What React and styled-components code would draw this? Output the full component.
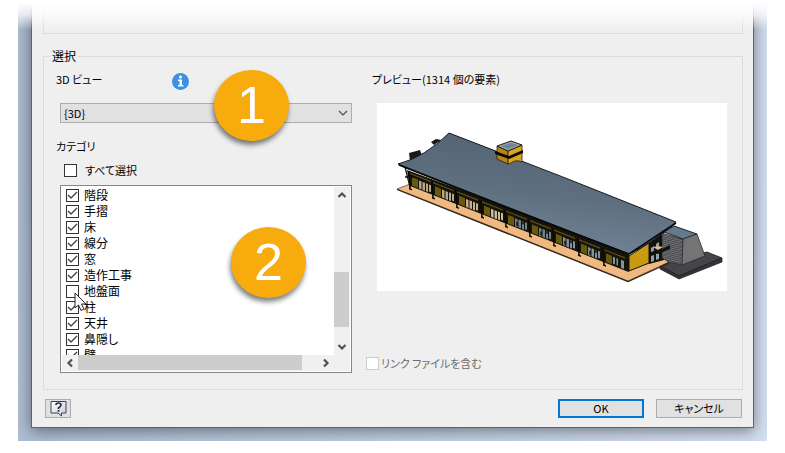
import React, { useState } from 'react'
import styled, { createGlobalStyle, css } from 'styled-components'

const GlobalStyle = createGlobalStyle`
  * {
    box-sizing: border-box;
  }
  body {
    margin: 0;
    background: #fff;
  }
  body, button, select, input {
    font-family: "Noto Sans CJK JP", "Liberation Sans", sans-serif;
    font-size: 11px;
    line-height: 16px;
    font-feature-settings: "palt";
    color: #000;
  }
`

const Backdrop = styled.main`
  position: relative;
  margin: 0 18px;
  padding: 0 13px 13px;
  overflow: hidden;
  background: linear-gradient(100deg, #a9b9cf, #d3dff1);
`

const Fade = styled.div`
  position: absolute;
  top: 0;
  left: 0;
  right: 0;
  height: 30px;
  background: linear-gradient(#fff 10%, rgba(255, 255, 255, 0.75) 50%, rgba(255, 255, 255, 0));
  pointer-events: none;
`

const Dialog = styled.form`
  padding: 0 10px 0 11px;
  border: 1px solid #5d6268;
  border-top: 0;
  background: #efefef;
  box-shadow: 0 3px 14px rgba(0, 0, 0, 0.45);
`

const UpperGroup = styled.div`
  height: 34px;
  border: 1px solid #dcdcdc;
  border-top: 0;
`

const Group = styled.fieldset`
  min-width: 0;
  margin: 14px 0 0;
  padding: 0 6px 16px;
  border: 1px solid #dcdcdc;
`

const Legend = styled.legend`
  padding: 0 2px;
  font-size: 12px;
`

const Columns = styled.div`
  display: grid;
  grid-template-columns: 296px minmax(0, 1fr);
  gap: 14px;
  padding: 7px 9px 0 6px;
`

const Settings = styled.div`
  display: flex;
  flex-direction: column;
`

const ViewHeader = styled.div`
  display: flex;
  height: 19px;
  margin-bottom: 13px;
`

const ViewLabel = styled.label`
  width: 116px;
`

const InfoButton = styled.button`
  align-self: flex-end;
  width: 17px;
  height: 17px;
  padding: 0;
  border: 0;
  background: none;

  svg {
    display: block;
  }
`

const SelectWrap = styled.div`
  position: relative;
  display: grid;
  align-items: center;
  margin-left: 4px;

  > select, > svg {
    grid-area: 1 / 1;
  }
  > svg {
    justify-self: end;
    margin-right: 4px;
    pointer-events: none;
  }
`

const Select = styled.select`
  appearance: none;
  width: 100%;
  height: 20px;
  padding: 0 3px;
  border: 1px solid #adadad;
  border-radius: 0;
  background: #e1e1e1;
  line-height: 16px;
`

const CategoryTitle = styled.div`
  margin: 15px 0 8px;
`

const CheckLabel = styled.label`
  display: flex;
  align-items: center;
  height: 16px;
  gap: ${({ $gap }) => $gap || 5}px;
  padding-left: ${({ $indent }) => $indent || 0}px;
  white-space: nowrap;
  ${({ $muted }) => $muted && css`
    color: #6d6d6d;
  `}
`

const BoxWrap = styled.span`
  display: grid;
  flex: none;

  > * {
    grid-area: 1 / 1;
  }
  > svg {
    pointer-events: none;
  }
`

const Box = styled.input`
  appearance: none;
  width: 13px;
  height: 13px;
  margin: 0;
  border: 1px solid #333;
  background: #fff;

  &:disabled {
    border-color: #ccc;
  }
`

const ListWrap = styled.div`
  position: relative;
  margin: 7px 0 0 4px;
`

const ListBox = styled.div`
  display: grid;
  grid-template: minmax(0, 1fr) 16px / minmax(0, 1fr) 16px;
  height: 188px;
  padding: 1px;
  border: 1px solid #828790;
  background: #fff;
`

const Rows = styled.ul`
  margin: 0;
  padding: 0;
  overflow: hidden;
  font-size: 12px;
  list-style: none;
`

const Row = styled.li`
  position: relative;
`

const ScrollBar = styled.div`
  display: flex;
  flex-direction: ${({ $vertical }) => ($vertical ? 'column' : 'row')};
  background: #f0f0f0;
`

const ScrollArrow = styled.button`
  display: flex;
  flex: none;
  align-items: center;
  justify-content: center;
  width: 16px;
  height: 16px;
  padding: 0;
  border: 0;
  background: none;
`

const Track = styled.div`
  display: flex;
  flex: 1;
  flex-direction: inherit;
`

const Thumb = styled.div`
  flex: ${({ $size }) => $size};
  margin: ${({ $vertical }) => ($vertical ? '0 1px 0 0' : '0 0 1px')};
  background: #cdcdcd;
`

const Space = styled.div`
  flex: ${({ $size }) => $size};
`

const Corner = styled.div`
  background: #f0f0f0;
`

const Pointer = styled.svg`
  position: absolute;
  top: 9px;
  left: 12px;
  z-index: 1;
`

const Badge = styled.span`
  position: absolute;
  top: ${({ $top }) => $top}px;
  left: ${({ $left }) => $left}px;
  z-index: 2;
  width: 75px;
  height: 71px;
  border-radius: 50%;
  background: #f8ab0c;
  box-shadow: -1px 4px 5px rgba(0, 0, 0, 0.5);
  color: #fff;
  font-family: "Liberation Sans", sans-serif;
  font-size: 52px;
  line-height: 70px;
  text-align: center;
`

const Preview = styled.div`
  display: flex;
  flex-direction: column;
`

const PreviewTitle = styled.div`
  padding-left: 6px;
`

const Canvas = styled.div`
  margin: 16px 0 64px 11px;
  background: #fff;

  svg {
    display: block;
    width: 100%;
    height: 188px;
  }
`

const Footer = styled.div`
  display: flex;
  gap: 12px;
  padding: 9px 1px 9px 2px;
`

const Button = styled.button`
  width: 86px;
  height: 19px;
  padding: 0;
  border: 1px solid #adadad;
  background: #e1e1e1;
  line-height: 15px;
  ${({ $primary }) => $primary && css`
    border: 2px solid #0078d7;
  `}
`

const HelpButton = styled(Button)`
  display: flex;
  align-items: center;
  justify-content: center;
  width: 26px;
  margin-right: auto;
`

const arrowPaths = {
  up: 'M1.5 7 L5 3.5 L8.5 7',
  down: 'M1.5 3 L5 6.5 L8.5 3',
  left: 'M7 1.5 L3.5 5 L7 8.5',
  right: 'M3 1.5 L6.5 5 L3 8.5',
}

const Arrow = ({ to }) => (
  <svg width="10" height="10" viewBox="0 0 10 10" fill="none" stroke="#505050" strokeWidth="2.2">
    <path d={ arrowPaths[to] } />
  </svg>
)

const Check = ({ children, checked, disabled, onChange, ...rest }) => (
  <CheckLabel { ...rest }>
    <BoxWrap>
      <Box type="checkbox" checked={ checked } disabled={ disabled } onChange={ onChange } />
      { checked && (
        <svg width="13" height="13" viewBox="0 0 13 13" fill="none" stroke="#444" strokeWidth="1.4">
          <path d="M2 6 L5 9 L11 3" />
        </svg>
      ) }
    </BoxWrap>
    { children }
  </CheckLabel>
)

const InfoIcon = () => (
  <svg width="17" height="17" viewBox="0 0 17 17">
    <circle cx="8.5" cy="8.5" r="8.5" fill="#3f90df" />
    <circle cx="8.5" cy="4" r="1.5" fill="#fff" />
    <path d="M6 6.5 H10 V12 H11.5 V13.5 H6 V12 H7.5 V8 H6 Z" fill="#fff" />
  </svg>
)

const HelpIcon = () => (
  <svg width="17" height="17" viewBox="0 0 17 17">
    <defs>
      <linearGradient id="bubble" x1="0" y1="0" x2="1" y2="1">
        <stop offset="0" stopColor="#fff" />
        <stop offset="1" stopColor="#c3ccd6" />
      </linearGradient>
    </defs>
    <path d="M1 1.5 H16 V13 H11.5 V16 L8 13 H1 Z" fill="url(#bubble)" stroke="#3a4654" />
    <path d="M6 5 Q6 3 8.500 3 Q11 3 11 5 Q11 6.200 8.500 8 V9" fill="none" stroke="#26313d" strokeWidth="1.700" />
    <path d="M7.600 10 H9.400 V11.700 H7.600 Z" fill="#26313d" />
  </svg>
)

// one entry per facade bay: x of its post, and the glass tint
const bays = [
  [33, '#b9a58a'], [56, '#b9a58a'], [80, '#c5b191'], [105, '#cdbb9c'],
  [129, '#71828c'], [153, '#71828c'], [177, '#82939a'], [202, '#82939a'], [227, '#82939a'],
]

const Building = () => (
  <svg viewBox="0 0 350 188" role="img" aria-label="プレビュー">
    <defs>
      <linearGradient id="roof" x1="0" y1="1" x2="0.3" y2="0">
        <stop offset="0" stopColor="#7a8c9d" />
        <stop offset="0.6" stopColor="#5e6f80" />
        <stop offset="1" stopColor="#556473" />
      </linearGradient>
      <pattern id="bricks" width="5" height="4" patternUnits="userSpaceOnUse" patternTransform="matrix(1 .25 0 1 0 0)">
        <path d="M0 0 H5 V4 H0 Z" fill="#77797c" />
        <path d="M0 .5 H5 M0 2.500 H5 M1 0 V2 M3.500 2 V4" stroke="#3c3e42" strokeWidth=".7" />
      </pattern>
    </defs>
    <path d="M32 50 L43 47 L45 53 L33 58 Z M54 39 L59 36 L64 37 L57 42 Z" fill="#17191b" />
    <path d="M283 163 L292 158 L330 149 L345 155 L302 173 Z" fill="#454549" stroke="#1b1b1b" strokeWidth=".8" />
    <path d="M283 163 L302 173 L345 155 V159 L302 176 L283 166 Z" fill="#343436" stroke="#1b1b1b" strokeWidth=".7" />
    <path d="M20 86 L33 81 L250 168 L286 155 L292 159 L251 178 Z" fill="#efb981" stroke="#302114" strokeWidth=".6" />
    <path d="M20 86.500 L251 178.500 L292 160" fill="none" stroke="#302114" strokeWidth="1.200" />
    <path d="M30 67 L252 149 V169 L33 83 Z" fill="#15140c" />
    { bays.map(([x, glass]) => (
      <g key={ x } transform={ `matrix(1 .39 0 1 ${ x } ${ 83 + (x - 33) * 0.393 })` }>
        <path d="M2 -9.500 H8 V-1 H2 Z" fill="#6a580f" />
        <path d="M0 -12.500 H21" stroke="#66540f" strokeWidth="1.200" />
        { x < 225 && <path d="M9 -9 H11.500 V-1 H9 Z M12.500 -9 H15 V-1 H12.500 Z M16 -9 H18 V-1 H16 Z M19 -9 H21 V-2 H19 Z" fill={ glass } /> }
        { x > 120 && <path d="M11 -6 V-2 M17 -9 V-6" stroke="#15140c" strokeWidth="1.500" /> }
        { x > 225 && <path d="M9 -9 H11 V-2 H9 Z M12.500 -9 H14 V-2 H12.500 Z M17 -9 H20 V-1 H17 Z" fill={ glass } /> }
        <path d="M-1 -14 L0 3" stroke="#080808" strokeWidth="1.500" />
        <path d="M-1 3 H2" stroke="#080808" strokeWidth="1.500" />
      </g>
    )) }
    <path d="M28 64 L33 84 M28 74 H36" fill="none" stroke="#111" strokeWidth="1.300" />
    <path d="M252 153 L272 140 V160 L252 168 Z" fill="#c99b12" stroke="#15140c" />
    <path d="M272 140 L287 129 V157 L272 161 Z" fill="#111" />
    <path d="M274 145 L277 143 V148 L274 149 Z M274 153 L277 152 V158 L274 159 Z M279 151 L282 150 V156 L279 157 Z M279 141 L282 139 V143 L279 144 Z" fill="#92a6a6" />
    <path d="M285 130 L306 136 V162 L292 159 L285 155 Z" fill="url(#bricks)" stroke="#222" strokeWidth=".6" />
    <path d="M287 129 L297 123 L320 131 L306 136 Z" fill="#65798e" stroke="#222" />
    <path d="M306 136 L320 131 L328 153 L305 162 Z" fill="#747474" stroke="#292929" strokeWidth=".8" />
    <path d="M276 146 L281 148 L293 142 V146 L281 151 Z" fill="#111" />
    <path d="M276 144 L281 143 L286 144 L281 147 Z" fill="#e8b88a" />
    <path d="M21 61 Q48 54 72 30 Q185 73 299 119 Q277 139 252 151 Q140 108 21 61 Z" fill="url(#roof)" stroke="#15191d" />
    <path d="M22 62 Q140 109 252 151 L299 120" fill="none" stroke="#080808" strokeWidth="1.600" />
    <path d="M120 43 L131 48 V61 L120 56 Z" fill="#b8860e" stroke="#222" strokeWidth=".8" />
    <path d="M131 48 L145 42 V59 Q139 56 134 60 L131 61 Z" fill="#d8a51a" stroke="#222" strokeWidth=".8" />
    <path d="M120 43 L134 38 L145 42 L131 48 Z" fill="#9ca5a7" stroke="#222" />
    <path d="M124 43 L134 40 L141 42 L131 46 Z" fill="#718596" />
    <path d="M118 48 L132 53 L146 47 V50 L132 56 L118 51 Z" fill="#080808" />
  </svg>
)

const initialCategories = [
  ['階段', true],
  ['手摺', true],
  ['床', true],
  ['線分', true],
  ['窓', true],
  ['造作工事', true],
  ['地盤面', false],
  ['柱', true],
  ['天井', true],
  ['鼻隠し', true],
  ['壁', true],
]

const App = () => {
  const [categories, setCategories] = useState(initialCategories)
  const allChecked = categories.every(([, checked]) => checked)

  const toggle = (name) => setCategories(
    categories.map(([n, checked]) => [n, n === name ? !checked : checked])
  )
  const toggleAll = () => setCategories(categories.map(([n]) => [n, !allChecked]))

  return (
    <>
      <GlobalStyle />
      <Backdrop>
        <Dialog onSubmit={ e => e.preventDefault() }>
          <UpperGroup />
          <Group>
            <Legend>選択</Legend>
            <Columns>
              <Settings>
                <ViewHeader>
                  <ViewLabel htmlFor="view">3D ビュー</ViewLabel>
                  <InfoButton type="button"><InfoIcon /></InfoButton>
                </ViewHeader>
                <SelectWrap>
                  <Select id="view">
                    <option>{ '{3D}' }</option>
                  </Select>
                  <svg width="10" height="10" viewBox="0 0 10 10" fill="none" stroke="#505050" strokeWidth="1.2">
                    <path d="M1 3 L5 7 L9 3" />
                  </svg>
                  <Badge $top={ -33 } $left={ 154 }>1</Badge>
                </SelectWrap>
                <CategoryTitle>カテゴリ</CategoryTitle>
                <Check $indent={ 8 } $gap={ 8 } checked={ allChecked } onChange={ toggleAll }>すべて選択</Check>
                <ListWrap>
                  <ListBox>
                    <Rows>
                      { categories.map(([name, checked]) => (
                        <Row key={ name }>
                          <Check $indent={ 4 } checked={ checked } onChange={ () => toggle(name) }>{ name }</Check>
                          { name === '地盤面' && (
                            <Pointer width="14" height="20" viewBox="0 0 14 20">
                              <path d="M1 1 V16 L4.500 13 L7 18.500 L10 17 L7.500 12 H12 Z" fill="#fff" stroke="#23233a" />
                            </Pointer>
                          ) }
                        </Row>
                      )) }
                    </Rows>
                    <ScrollBar $vertical>
                      <ScrollArrow type="button"><Arrow to="up" /></ScrollArrow>
                      <Track>
                        <Space $size={ 68 } />
                        <Thumb $vertical $size={ 55 } />
                        <Space $size={ 12 } />
                      </Track>
                      <ScrollArrow type="button"><Arrow to="down" /></ScrollArrow>
                    </ScrollBar>
                    <ScrollBar>
                      <ScrollArrow type="button"><Arrow to="left" /></ScrollArrow>
                      <Track>
                        <Thumb $size={ 224 } />
                        <Space $size={ 16 } />
                      </Track>
                      <ScrollArrow type="button"><Arrow to="right" /></ScrollArrow>
                    </ScrollBar>
                    <Corner />
                  </ListBox>
                  <Badge $top={ 42 } $left={ 171 }>2</Badge>
                </ListWrap>
              </Settings>
              <Preview>
                <PreviewTitle>プレビュー(1314 個の要素)</PreviewTitle>
                <Canvas><Building /></Canvas>
                <Check $muted $gap={ 2 } checked={ false } disabled>リンク ファイルを含む</Check>
              </Preview>
            </Columns>
          </Group>
          <Footer>
            <HelpButton type="button"><HelpIcon /></HelpButton>
            <Button type="submit" $primary>OK</Button>
            <Button type="button">キャンセル</Button>
          </Footer>
        </Dialog>
        <Fade />
      </Backdrop>
    </>
  )
}

export default App
